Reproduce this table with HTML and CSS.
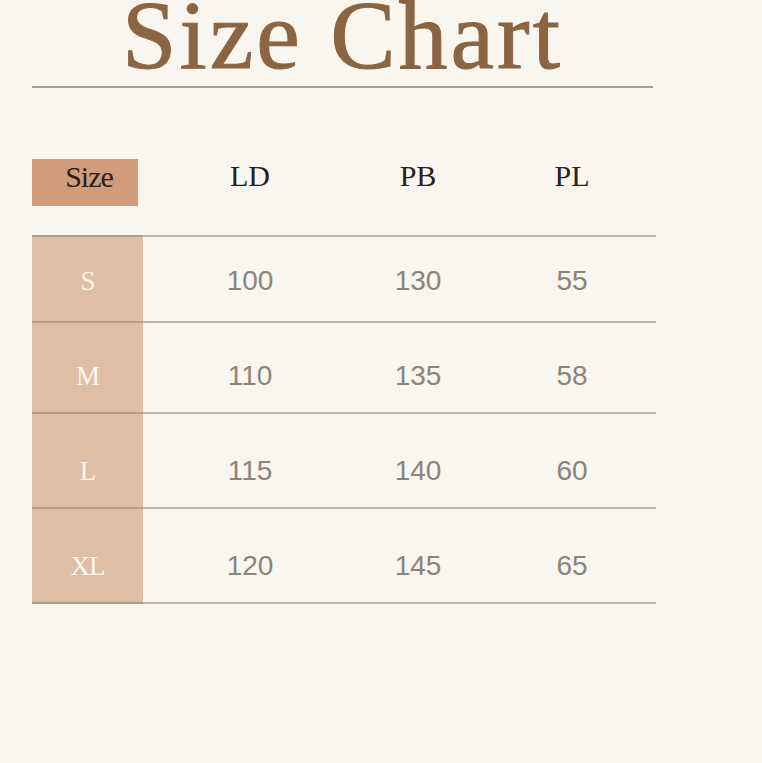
FILE: index.html
```html
<!DOCTYPE html>
<html>
<head>
<meta charset="utf-8">
<link rel="stylesheet" href="styles.css">
</head>
<body>
<div class="page">
  <h1 class="title">Size Chart</h1>
  <div class="chart">
    <div class="head">
      <div class="head-size"><span>Size</span></div>
      <div class="head-cell">LD</div>
      <div class="head-cell">PB</div>
      <div class="head-cell head-last">PL</div>
    </div>
    <div class="row row-1">
      <div class="size">S</div><div class="num">100</div><div class="num">130</div><div class="num num-last">55</div>
    </div>
    <div class="row row-2">
      <div class="size">M</div><div class="num">110</div><div class="num">135</div><div class="num num-last">58</div>
    </div>
    <div class="row row-3">
      <div class="size">L</div><div class="num">115</div><div class="num">140</div><div class="num num-last">60</div>
    </div>
    <div class="row row-4">
      <div class="size">XL</div><div class="num">120</div><div class="num">145</div><div class="num num-last">65</div>
    </div>
  </div>
</div>
</body>
</html>
```
FILE: styles.css
```css
html, body {
  margin: 0;
  padding: 0;
  background: #f9f5ef;
}
.page {
  width: 762px;
  height: 763px;
  padding-left: 32px;
  box-sizing: border-box;
  overflow: hidden;
}
.title {
  margin: 0;
  width: 621px;
  height: 70px;
  padding-bottom: 16px;
  border-bottom: 2px solid #a49a8f;
  font-family: "Liberation Serif", serif;
  font-weight: normal;
  font-size: 98px;
  line-height: 70px;
  letter-spacing: 3px;
  color: #8b6442;
  -webkit-text-stroke: 1px #8b6442;
  text-align: center;
}
.chart {
  width: 624px;
  margin-top: 71px;
}
.head {
  display: grid;
  grid-template-columns: 111px 214px 122px 177px;
  height: 47px;
  align-items: center;
  margin-bottom: 29px;
  font-family: "Liberation Serif", serif;
  font-size: 30px;
  color: #2b2119;
}
.head-size {
  width: 106px;
  height: 47px;
  background: #d19c7b;
  display: flex;
  align-items: center;
  justify-content: center;
}
.head-size span {
  margin-top: -12px;
  padding-left: 8px;
  letter-spacing: -1px;
}
.head-cell {
  text-align: center;
  margin-top: -14px;
}
.head-last {
  padding-left: 9px;
}
.row {
  display: grid;
  grid-template-columns: 111px 214px 122px 177px;
  align-items: end;
  border-top: 2px solid rgba(140, 128, 114, 0.55);
  background: linear-gradient(to right, #dfbea6 111px, transparent 111px);
  padding-bottom: 22px;
  box-sizing: border-box;
}
.row-1 { height: 86px; padding-bottom: 26px; }
.row-2 { height: 91px; }
.row-3 { height: 95px; }
.row-4 { height: 97px; border-bottom: 2px solid rgba(140, 128, 114, 0.55); }
.size {
  font-family: "Liberation Serif", serif;
  font-size: 27px;
  line-height: 28px;
  color: #fdf7ef;
  text-align: center;
  letter-spacing: -1px;
}
.num {
  font-family: "Liberation Sans", sans-serif;
  font-size: 28px;
  line-height: 28px;
  color: #8a847b;
  text-align: center;
}
.num-last {
  padding-left: 9px;
}
```
